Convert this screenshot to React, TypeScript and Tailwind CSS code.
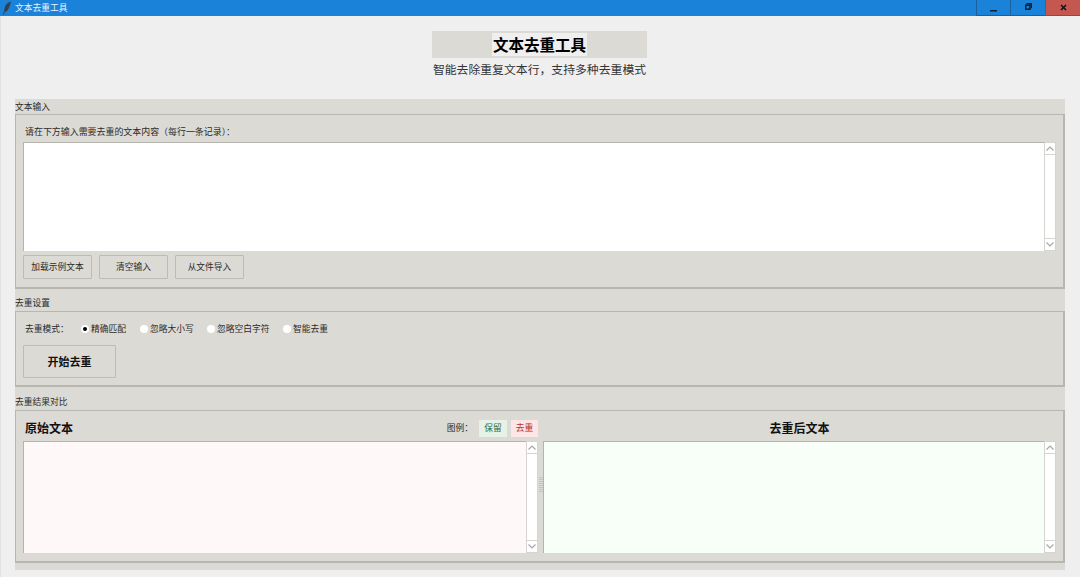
import type { ReactNode } from 'react'

const cjk = { fontFamily: '"Noto Sans CJK SC", "Liberation Sans", sans-serif' }

function Chevron({ up }: { up?: boolean }) {
  return (
    <svg width="8" height="5" viewBox="0 0 8 5" fill="none" stroke="#a8a8a8" strokeWidth="1.2">
      <path d={up ? 'M0.5 4.5 L4 1 L7.5 4.5' : 'M0.5 0.5 L4 4 L7.5 0.5'} />
    </svg>
  )
}

function Scrollbar() {
  return (
    <div className="w-[12px] shrink-0 flex flex-col bg-white border border-[#d6d4cf]">
      <div className="h-[12px] flex items-center justify-center border-b border-[#d6d4cf]">
        <Chevron up />
      </div>
      <div className="flex-1" />
      <div className="h-[12px] flex items-center justify-center border-t border-[#d6d4cf]">
        <Chevron />
      </div>
    </div>
  )
}

function TextBox({ bg, className }: { bg: string; className: string }) {
  return (
    <div className={`flex ${className}`}>
      <div className={`flex-1 border-t border-l border-[#b5b3ad] ${bg}`} />
      <Scrollbar />
    </div>
  )
}

function Group({ label, labelClass, panelClass, children }: { label: string; labelClass: string; panelClass: string; children: ReactNode }) {
  return (
    <>
      <div className={`flex items-end text-[8.75px] leading-[15px] text-[#2b2b2b] ${labelClass}`}>{label}</div>
      <div className={`border border-[#b8b6b0] border-b-2 border-r-2 ${panelClass}`}>{children}</div>
    </>
  )
}

function ToolButton({ children }: { children: string }) {
  return (
    <div className="w-[69px] h-[24px] flex items-center justify-center border border-[#bdbbb5] rounded-[1px] text-[8.75px] text-[#2b2b2b]">
      {children}
    </div>
  )
}

function Radio({ label, checked, gap }: { label: string; checked?: boolean; gap: string }) {
  return (
    <div className={`flex items-center gap-[2px] ${gap}`}>
      <span className="w-[8px] h-[8px] rounded-full bg-white flex items-center justify-center">
        {checked && <span className="w-[4px] h-[4px] rounded-full bg-black" />}
      </span>
      <span>{label}</span>
    </div>
  )
}

function TitleBar() {
  return (
    <div className="h-[16px] shrink-0 bg-[#1a82d9] flex items-center text-white">
      <svg className="ml-[2px]" width="10" height="14" viewBox="0 0 10 14" fill="#33404d">
        <path d="M9 0.5 C5.5 1.5 3 4 2.5 7.5 C2.3 9 2.2 10 2.3 10.6 L0.8 13.5 L1.5 13.8 L3 11 C5.5 10.5 7.5 7 9 0.5 Z" />
      </svg>
      <span className="ml-[3px] text-[8.75px] text-[#e6f2fc]">文本去重工具</span>
      <div className="ml-auto flex h-full">
        <div className="w-[34px] h-full flex items-center justify-center border-l border-b border-[#1b5f9e]">
          <svg width="7" height="8" viewBox="0 0 7 8"><rect x="0" y="6" width="7" height="1.5" fill="#10202e" /></svg>
        </div>
        <div className="w-[35px] h-full flex items-start pt-[3px] justify-center border-l border-b border-[#1b5f9e]">
          <svg width="7" height="7" viewBox="0 0 7 7" fill="none" stroke="#10202e">
            <rect x="0.7" y="2.2" width="4.2" height="4" strokeWidth="1.5" />
            <path d="M2.2 1.5 V0.7 H6.4 V4.5 H5.5" strokeWidth="1.4" />
          </svg>
        </div>
        <div className="w-[35px] h-full flex items-center justify-center bg-[#c4574f] border-l border-b border-[#8f4a48]">
          <svg width="7" height="7" viewBox="0 0 7 7" stroke="#10101a" strokeWidth="1.5"><path d="M1 1 L6 6 M6 1 L1 6" /></svg>
        </div>
      </div>
    </div>
  )
}

export default function App() {
  return (
    <div className="w-[1080px] h-[577px] flex flex-col overflow-hidden bg-[#efefef]" style={cjk}>
      <TitleBar />
      <div className="flex-1 flex flex-col border-l border-[#e2e2e2]">
        <div className="flex flex-col items-center pr-[2px] pt-[15px] h-[83px] shrink-0">
          <div className="w-[215px] h-[27px] bg-[#dcdad5] flex items-center justify-center">
            <span className="bg-[#efefef] px-[1px] h-[23px] text-[15.5px] leading-[23px] font-bold text-black">文本去重工具</span>
          </div>
          <div className="mt-[1px] text-[11.85px] leading-[20px] text-[#333333]">智能去除重复文本行，支持多种去重模式</div>
        </div>

        <div className="ml-[14px] w-[1050px] h-[471px] shrink-0 bg-[#dcdad5] flex flex-col">
          <Group label="文本输入" labelClass="h-[15px]" panelClass="h-[175px] pl-[7px] pr-[7px]">
            <div className="h-[27px] pt-[9px] pl-[2px] text-[8.95px] leading-[15px] text-[#2b2b2b]">请在下方输入需要去重的文本内容（每行一条记录）：</div>
            <TextBox bg="bg-white" className="h-[109px]" />
            <div className="flex gap-[7px] mt-[4px]">
              <ToolButton>加载示例文本</ToolButton>
              <ToolButton>清空输入</ToolButton>
              <ToolButton>从文件导入</ToolButton>
            </div>
          </Group>

          <Group label="去重设置" labelClass="h-[22px] pb-[1px]" panelClass="h-[76px] pl-[7px]">
            <div className="h-[33px] flex items-center pt-[1px] pl-[2px] text-[8.75px] text-[#2b2b2b]">
              <span className="w-[56px]">去重模式：</span>
              <Radio label="精确匹配" checked gap="w-[59px]" />
              <Radio label="忽略大小写" gap="w-[67px]" />
              <Radio label="忽略空白字符" gap="w-[76px]" />
              <Radio label="智能去重" gap="w-[60px]" />
            </div>
            <div className="w-[93px] h-[33px] flex items-center justify-center border border-[#bdbbb5] rounded-[1px] text-[11px] font-bold text-[#111111]">开始去重</div>
          </Group>

          <Group label="去重结果对比" labelClass="h-[23px] pb-[1px]" panelClass="h-[153px] pl-[7px] pr-[7px] flex gap-[5px]">
            <div className="w-[515px] flex flex-col">
              <div className="h-[30px] pt-[4px] flex items-center">
                <span className="ml-[2px] text-[12px] font-bold text-[#111111]">原始文本</span>
                <span className="ml-auto text-[8.75px] text-[#2b2b2b]">图例：</span>
                <span className="ml-[6px] w-[28px] h-[17px] flex items-center justify-center bg-[#e6f2e6] text-[8.75px] text-[#2f6b3a]">保留</span>
                <span className="ml-[4px] w-[27px] h-[17px] flex items-center justify-center bg-[#ffe6e6] text-[8.75px] text-[#b03030]">去重</span>
              </div>
              <TextBox bg="bg-[#fff8f8]" className="h-[112px]" />
            </div>
            <div className="flex-1 flex flex-col relative">
              <div className="h-[30px] pt-[4px] flex items-center justify-center">
                <span className="text-[12px] font-bold text-[#111111]">去重后文本</span>
              </div>
              <TextBox bg="bg-[#f8fff8]" className="h-[112px]" />
              {/* sash grip between the panes */}
              <div className="absolute left-[-4px] top-[66px] w-[4px] h-[16px] bg-[repeating-linear-gradient(to_bottom,#c4c2bc_0_1px,#dcdad5_1px_2px)]" />
            </div>
          </Group>
        </div>
      </div>
    </div>
  )
}
